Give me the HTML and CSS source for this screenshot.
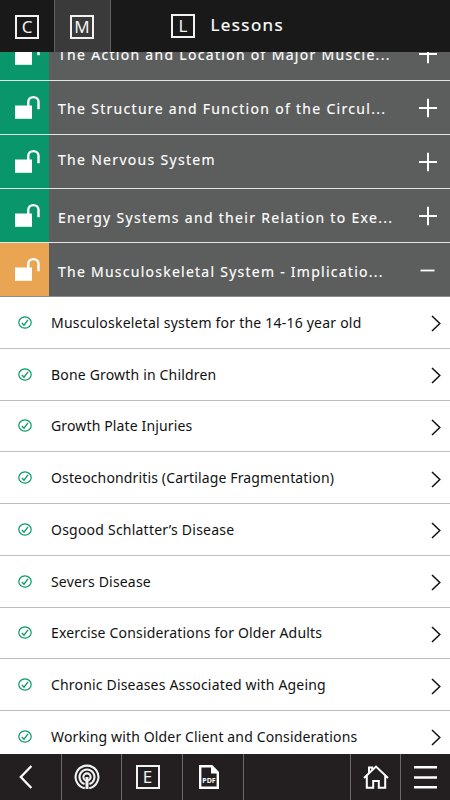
FILE: index.html
```html
<!DOCTYPE html>
<html lang="en">
<head>
<meta charset="utf-8">
<title>Lessons</title>
<link rel="stylesheet" href="styles.css">
</head>
<body>
<svg class="defs" aria-hidden="true">
  <symbol id="lock" viewBox="0 0 49 53"><path d="M15 24.5h17v13.3H15z" fill="#fff"/><path d="M28.3 25v-4.2a5.1 4.7 0 0 1 10.2 0V28.2" fill="none" stroke="#fff" stroke-width="2.4"/></symbol>
  <symbol id="plus" viewBox="0 0 20 20"><path d="M1 10h18M10 .8v18.4" stroke="#fff" stroke-width="2"/></symbol>
  <symbol id="check" viewBox="0 0 14 13"><ellipse cx="7" cy="6.5" rx="6.2" ry="5.7" fill="none" stroke="#0a9a66" stroke-width="1.2"/><path d="M3.9 7l2.1 2.2 4-5.3" fill="none" stroke="#0a9a66" stroke-width="1.3"/></symbol>
  <symbol id="go" viewBox="0 0 10 17"><path d="M1 1l7.8 7.5L1 16" fill="none" stroke="#111" stroke-width="1.5"/></symbol>
</svg>
<div class="app">
  <header class="top">
    <div class="tab"><span class="box">C</span></div>
    <div class="tab active"><span class="box">M</span></div>
    <div class="heading"><span class="box">L</span><h1>Lessons</h1></div>
  </header>
  <main class="content">
    <section class="modules">
      <div class="module"><div class="state"><svg><use href="#lock"/></svg></div><p class="name">The Action and Location of Major Muscle...</p><svg class="toggle"><use href="#plus"/></svg></div>
      <div class="module"><div class="state"><svg><use href="#lock"/></svg></div><p class="name">The Structure and Function of the Circul...</p><svg class="toggle"><use href="#plus"/></svg></div>
      <div class="module short"><div class="state"><svg><use href="#lock"/></svg></div><p class="name">The Nervous System</p><svg class="toggle"><use href="#plus"/></svg></div>
      <div class="module low"><div class="state"><svg><use href="#lock"/></svg></div><p class="name">Energy Systems and their Relation to Exe...</p><svg class="toggle"><use href="#plus"/></svg></div>
      <div class="module low open"><div class="state"><svg><use href="#lock"/></svg></div><p class="name">The Musculoskeletal System - Implicatio...</p><svg class="toggle" viewBox="0 0 20 20"><path d="M2.5 10.5h14" stroke="#fff" stroke-width="1.8"/></svg></div>
    </section>
    <ul class="lessons">
      <li><svg class="check"><use href="#check"/></svg><span class="wide">Musculoskeletal system for the 14-16 year old</span><svg class="go"><use href="#go"/></svg></li>
      <li><svg class="check"><use href="#check"/></svg><span>Bone Growth in Children</span><svg class="go"><use href="#go"/></svg></li>
      <li><svg class="check"><use href="#check"/></svg><span class="tight">Growth Plate Injuries</span><svg class="go"><use href="#go"/></svg></li>
      <li><svg class="check"><use href="#check"/></svg><span class="tight">Osteochondritis (Cartilage Fragmentation)</span><svg class="go"><use href="#go"/></svg></li>
      <li><svg class="check"><use href="#check"/></svg><span class="wide">Osgood Schlatter’s Disease</span><svg class="go"><use href="#go"/></svg></li>
      <li><svg class="check"><use href="#check"/></svg><span>Severs Disease</span><svg class="go"><use href="#go"/></svg></li>
      <li><svg class="check"><use href="#check"/></svg><span>Exercise Considerations for Older Adults</span><svg class="go"><use href="#go"/></svg></li>
      <li><svg class="check"><use href="#check"/></svg><span>Chronic Diseases Associated with Ageing</span><svg class="go"><use href="#go"/></svg></li>
      <li><svg class="check"><use href="#check"/></svg><span class="tight">Working with Older Client and Considerations</span><svg class="go"><use href="#go"/></svg></li>
    </ul>
  </main>
  <nav class="bottom">
    <div class="cell back"><svg viewBox="0 0 14 24"><path d="M12.4 1L1.8 12l10.6 11" fill="none" stroke="#fff" stroke-width="2.3"/></svg></div>
    <div class="cell cast"><svg viewBox="0 0 26 26"><g fill="none" stroke="#f2f2f2" stroke-width="2.1"><path d="M10.8 24.2a11.4 11.4 0 1 1 4.4 0"/><path d="M10.6 20.1a7.5 7.5 0 1 1 4.8 0"/><circle cx="13" cy="13" r="3.6"/><path d="M13 13v12" stroke-width="3"/></g></svg></div>
    <div class="cell exam"><span class="box">E</span></div>
    <div class="cell pdf"><svg viewBox="0 0 20 24"><path d="M1.2 1.2h11.6l6 6.3v15.3H1.2z" fill="none" stroke="#fff" stroke-width="2.4"/><path d="M12 1v7.5h7.5z" fill="#fff"/><text x="10" y="18" text-anchor="middle">PDF</text></svg></div>
    <div class="cell gap"></div>
    <div class="cell home"><svg viewBox="0 0 26 24"><path d="M1 13L13 1.6 25 13M3.8 11v11.8h6.4V16h5.6v6.8h6.4V11M6 8V2.5h3.2V5" fill="none" stroke="#fff" stroke-width="2"/></svg></div>
    <div class="cell menu"><svg viewBox="0 0 23 24"><path d="M0 2.3h23M0 12.5h23M0 22.3h23" stroke="#fff" stroke-width="2.6"/></svg></div>
  </nav>
</div>
</body>
</html>
```
FILE: styles.css
```css
* { box-sizing: border-box; margin: 0; padding: 0; }
body { font-family: "Noto Sans", sans-serif; background: #fff; overflow: hidden; }
svg { display: block; flex: none; }
.defs { display: none; }
.app { width: 450px; height: 800px; display: flex; flex-direction: column; overflow: hidden; }
.top { height: 52px; flex: none; display: flex; background: #191919; color: #fff; }
.tab { width: 54px; padding: 15px 0 0 15px; }
.tab.active { width: 57px; padding-left: 15px; background: #3a3a3a; border-left: 1px solid #606060; border-right: 1px solid #606060; }
.box { display: flex; align-items: center; justify-content: center; width: 24px; height: 24px; border: 2px solid #f2f2f2; color: #f2f2f2; font-size: 17px; line-height: 20px; flex: none; }
.heading { display: flex; padding: 14px 0 0 60px; }
.heading h1 { margin-left: 15.5px; font-size: 17px; line-height: 21px; font-weight: 400; letter-spacing: 1.4px; -webkit-text-stroke: .2px #fff; }
.content { flex: 1; min-height: 0; overflow: hidden; }
.modules { margin-top: -25px; }
.module { display: flex; align-items: center; height: 54px; background: #5c5e5d; color: #fff; border-bottom: 1px solid #e4e6e5; }
.module.open { border-bottom-color: #8b8b8b; }
.state { width: 49px; height: 53px; background: #08966a; flex: none; }
.open .state { background: #eaa552; }
.state svg { width: 49px; height: 53px; }
.name { width: 360px; padding: 3px 0 0 9px; font-size: 14px; line-height: 20px; letter-spacing: 1.3px; white-space: nowrap; -webkit-text-stroke: .15px #fff; }
.short .name { padding: 0 0 3px 9px; }
.low .name { padding-top: 4px; }
.open .name { letter-spacing: 1.25px; }
.toggle { width: 20px; height: 20px; margin-left: 9px; }
.lessons { list-style: none; }
.lessons li { display: flex; align-items: center; height: 51.75px; padding-left: 17.5px; border-bottom: 1px solid #bcbcbc; font-size: 14px; line-height: 20px; letter-spacing: .18px; color: #111; }
.lessons span { width: 380px; padding: 1px 0 0 19.5px; white-space: nowrap; }
.lessons .wide { letter-spacing: .22px; }
.lessons .tight { letter-spacing: .14px; }
.check { width: 14px; height: 13px; }
.go { width: 10px; height: 17px; margin: 3px 0 0 19.5px; }
.bottom { height: 46px; flex: none; display: flex; align-items: center; background: #231f20; }
.cell { height: 46px; border-right: 1px solid #6a6a6a; display: flex; align-items: center; justify-content: center; flex: none; }
.cell:last-child { border-right: 0; }
.back { width: 62px; padding-right: 9px; }
.back svg { width: 14px; height: 24px; }
.cast { width: 60px; padding-right: 9px; }
.cast svg { width: 26px; height: 26px; }
.exam { width: 61px; padding-right: 9px; }
.pdf { width: 61px; padding-right: 9px; }
.pdf svg { width: 20px; height: 24px; }
.pdf text { font: 700 7px "Noto Sans", sans-serif; fill: #fff; }
.gap { width: 107px; }
.home { width: 50px; }
.home svg { width: 26px; height: 24px; }
.menu { width: 49px; }
.menu svg { width: 23px; height: 24px; }
```
